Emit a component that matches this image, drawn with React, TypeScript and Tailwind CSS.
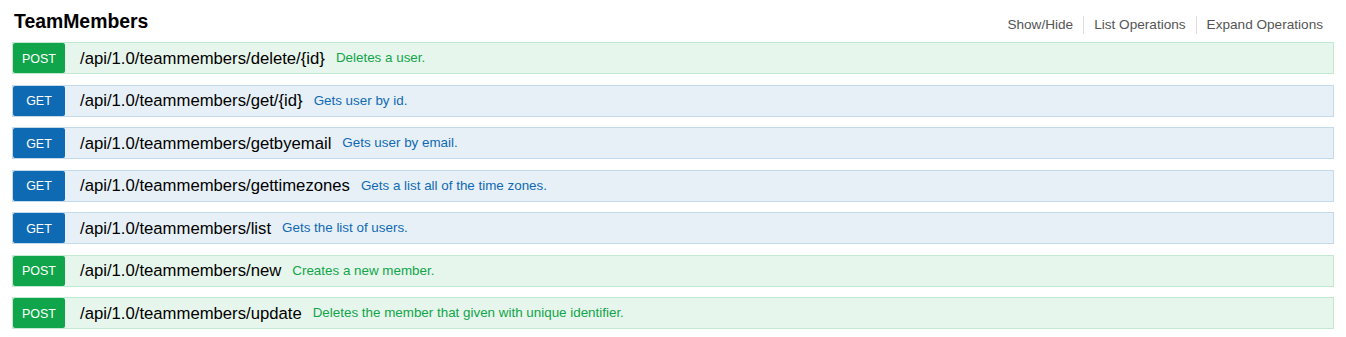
const endpoints = [
  { method: "POST", path: "/api/1.0/teammembers/delete/{id}", summary: "Deletes a user." },
  { method: "GET", path: "/api/1.0/teammembers/get/{id}", summary: "Gets user by id." },
  { method: "GET", path: "/api/1.0/teammembers/getbyemail", summary: "Gets user by email." },
  { method: "GET", path: "/api/1.0/teammembers/gettimezones", summary: "Gets a list all of the time zones." },
  { method: "GET", path: "/api/1.0/teammembers/list", summary: "Gets the list of users." },
  { method: "POST", path: "/api/1.0/teammembers/new", summary: "Creates a new member." },
  { method: "POST", path: "/api/1.0/teammembers/update", summary: "Deletes the member that given with unique identifier." },
];

const styles = {
  POST: {
    row: "bg-[#e7f6ec] border-[#c3e8d1]",
    badge: "bg-[#10a54a]",
    text: "text-[#10a54a]",
  },
  GET: {
    row: "bg-[#e7f0f7] border-[#c3d9ec]",
    badge: "bg-[#0f6ab4]",
    text: "text-[#0f6ab4]",
  },
} as const;

const Operation = ({ method, path, summary }: { method: "POST" | "GET"; path: string; summary: string }) => {
  const s = styles[method];
  return (
    <div className={`flex items-center h-[32px] border ${s.row}`}>
      <span
        className={`flex items-center justify-center w-[52px] h-[30px] rounded-[2px] text-white text-[12.5px] pt-[2px] ${s.badge}`}
      >
        {method}
      </span>
      <span className="ml-[15px] pt-[1px] text-[16.7px] text-black">{path}</span>
      <span className={`ml-[11px] pt-[1px] text-[13.4px] ${s.text}`}>{summary}</span>
    </div>
  );
};

export default function App() {
  const links = ["Show/Hide", "List Operations", "Expand Operations"];
  return (
    <div className="bg-white w-[1346px] h-[337px] px-[12px] font-['Liberation_Sans',Arial,sans-serif]">
      <div className="flex items-center justify-between h-[42px] pt-[2px]">
        <h2 className="ml-[2px] text-[19.4px] font-bold text-black">TeamMembers</h2>
        <ul className="flex items-center mt-[5px] mr-[1px]">
          {links.map((l, i) => (
            <li
              key={l}
              className={`px-[10px] text-[13.6px] leading-[18px] text-[#555] ${
                i < links.length - 1 ? "border-r border-[#ddd]" : ""
              }`}
            >
              {l}
            </li>
          ))}
        </ul>
      </div>
      <div className="flex flex-col gap-[10.5px]">
        {endpoints.map((e) => (
          <Operation key={e.path} method={e.method as "POST" | "GET"} path={e.path} summary={e.summary} />
        ))}
      </div>
    </div>
  );
}
